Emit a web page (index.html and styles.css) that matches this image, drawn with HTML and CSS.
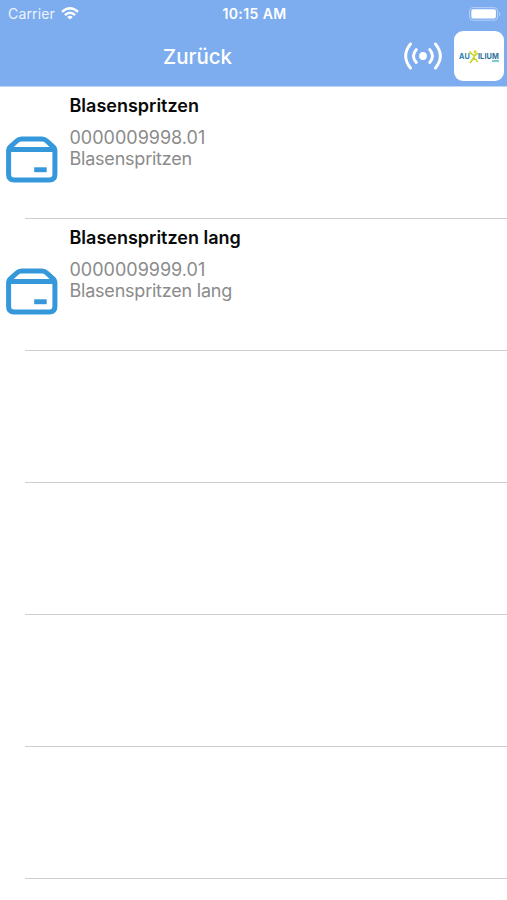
FILE: index.html
```html
<!DOCTYPE html>
<html lang="de">
<head>
<meta charset="utf-8">
<title>Artikel</title>
<link rel="stylesheet" href="styles.css">
</head>
<body>
<svg class="defs" width="0" height="0" aria-hidden="true">
  <symbol id="box" viewBox="0 0 52 47">
    <path d="M2.600 14 V38.500 Q2.600 43.900 8 43.900 H43.500 Q48.900 43.900 48.900 38.500 V14 Q48.900 12.500 47.500 11.200 L40.800 5 Q38.700 3.100 36 3.100 H15.500 Q12.800 3.100 10.700 5 L4 11.200 Q2.600 12.500 2.600 14 Z M3 13.500 H48.500" fill="none" stroke="#3498db" stroke-width="5"/>
    <path d="M28.200 31.300 H40.700 V36.200 H28.200 Z" fill="#3498db"/>
  </symbol>
</svg>
<header class="header">
  <div class="status">
    <div class="status-left">
      <span class="carrier">Carrier</span>
      <svg class="wifi" viewBox="0 0 18 13">
        <g fill="none" stroke="#fff" stroke-width="2.400">
          <path d="M1 4.900 Q9 -2.300 17 4.900"/>
          <path d="M3.900 8 Q9 3.500 14.100 8"/>
        </g>
        <path d="M6.200 9.900 Q9 7.600 11.800 9.900 L9 12.600 Z" fill="#fff"/>
      </svg>
    </div>
    <span class="time">10:15 AM</span>
    <div class="status-right">
      <svg class="battery" viewBox="0 0 32 14">
        <rect x=".6" y=".6" width="28" height="12.600" rx="3.200" fill="none" stroke="#b4d0f7" stroke-width="1"/>
        <rect x="2.300" y="2.300" width="24.600" height="9.200" rx="1.800" fill="#fff"/>
        <path d="M30 4.700 Q32.600 7 30 9.300 Z" fill="#b4d0f7"/>
      </svg>
    </div>
  </div>
  <nav class="nav">
    <span class="back">Zurück</span>
    <svg class="signal" viewBox="0 0 38 28">
      <circle cx="19" cy="14" r="3.900" fill="#fff"/>
      <g fill="none" stroke="#fff" stroke-width="2.900" stroke-linecap="round">
        <path d="M12.300 7.500 Q6.700 14 12.300 20.500 M25.700 7.500 Q31.300 14 25.700 20.500"/>
        <path d="M6.500 2 Q-3.200 14 6.500 26 M31.500 2 Q41.200 14 31.500 26"/>
      </g>
    </svg>
    <div class="logo">
      <span class="logo-au">AU</span>
      <svg class="logo-x" viewBox="0 0 10 15">
        <path d="M.5 2.500 Q3 6 5.500 6.500 L9 4 M5.500 6.500 L4.500 9 L1 14 M4.500 9 Q7.500 10 8.500 13" fill="none" stroke="#c8d42a" stroke-width="1.700"/>
        <circle cx="6" cy="2.800" r="1.500" fill="#e2cf2d"/>
      </svg>
      <span class="logo-ilium">ILIUM<i class="logo-mark"></i></span>
    </div>
  </nav>
</header>
<main class="list">
  <article class="row">
    <svg class="icon"><use href="#box"/></svg>
    <div class="text"><h2>Blasenspritzen</h2><p class="number">0000009998.01</p><p class="name">Blasenspritzen</p></div>
  </article>
  <article class="row">
    <svg class="icon"><use href="#box"/></svg>
    <div class="text"><h2>Blasenspritzen lang</h2><p class="number">0000009999.01</p><p class="name">Blasenspritzen lang</p></div>
  </article>
  <div class="row"></div>
  <div class="row"></div>
  <div class="row"></div>
  <div class="row"></div>
</main>
</body>
</html>
```
FILE: styles.css
```css
* { box-sizing: border-box; }
body { margin: 0; height: 900px; overflow: hidden; background: #fff; font-family: Inter, "Liberation Sans", sans-serif; }
.defs { display: block; }
.header { height: 87px; background: #7dacef; border-bottom: 1px solid #bed6f8; color: #fff; }
.status { display: grid; grid-template-columns: 1fr auto 1fr; height: 27px; align-items: center; padding: 0 6px 0 8px; }
.status-left { display: flex; align-items: center; gap: 6px; }
.carrier { font-size: 14px; line-height: 18px; letter-spacing: .15px; color: #edf4fd; }
.wifi { width: 18px; height: 13px; }
.time { font-size: 14px; line-height: 18px; font-weight: 600; letter-spacing: .4px; }
.status-right { display: flex; justify-content: flex-end; }
.battery { width: 32px; height: 14px; }
.nav { display: flex; align-items: center; height: 58px; padding: 0 3px 0 163px; }
.back { padding-top: 1px; font-size: 20.5px; font-weight: 500; line-height: 26px; }
.signal { width: 38px; height: 28px; margin: 0 12px 0 auto; }
.logo { display: flex; align-items: center; justify-content: center; width: 50px; height: 50px; border-radius: 9px; background: #fff; font-size: 7.3px; font-weight: 700; line-height: 9px; letter-spacing: .15px; }
.logo-au { color: #287fae; }
.logo-x { width: 10px; height: 15px; margin: 0 -1px; }
.logo-ilium { position: relative; color: #28709c; }
.logo-mark { position: absolute; right: 0; bottom: -1px; width: 7px; height: 2px; background: #7bcbd3; }
.list { display: flex; flex-direction: column; }
.row { position: relative; display: flex; height: 132px; padding-left: 6px; }
.row::after { content: ""; position: absolute; left: 25px; right: 0; bottom: 0; height: 1px; background: #cfcfd1; }
.icon { width: 52px; height: 47px; margin-top: 49px; }
.text { margin: 6px 0 0 11.5px; }
h2 { margin: 0 0 9px; padding-top: 1px; font-size: 18px; line-height: 24px; font-weight: 600; color: #090909; }
p { margin: 0; font-size: 18px; line-height: 22px; color: #8b8b8b; }
.name { margin-top: -1px; letter-spacing: -.22px; }
```
